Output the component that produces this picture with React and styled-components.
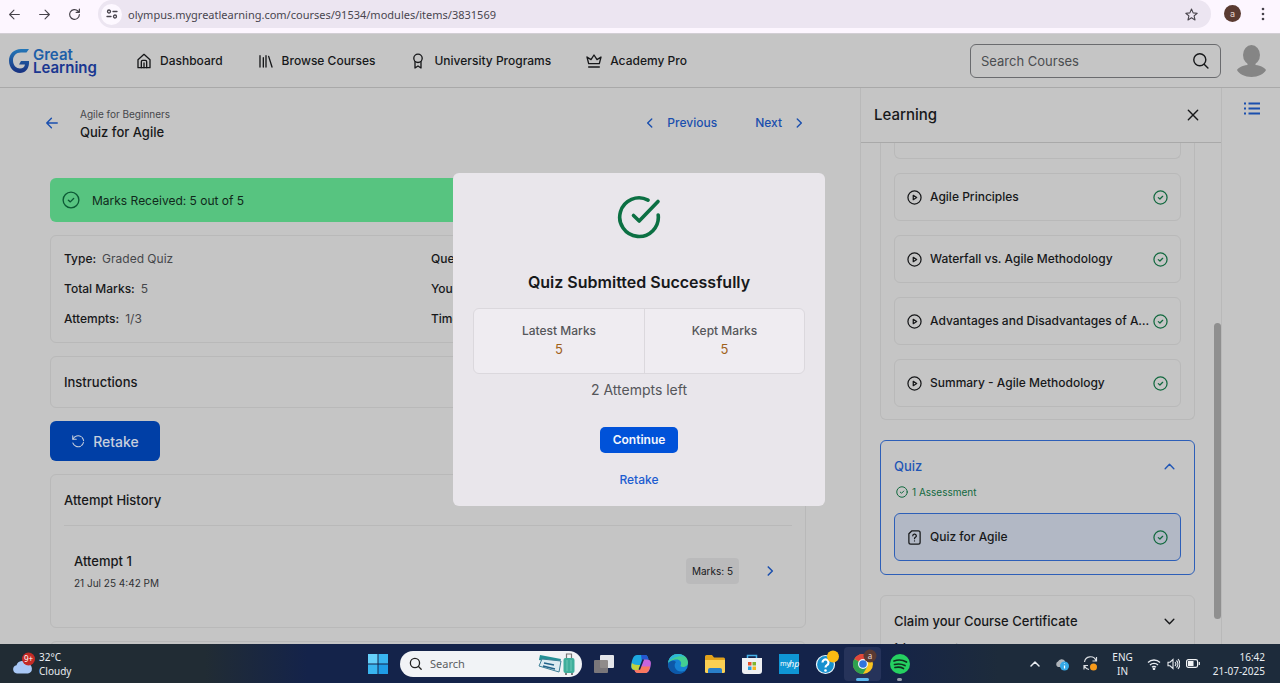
import React from "react";
import styled, { createGlobalStyle, css } from "styled-components";

const color = {
  page: "#c5c5c5",
  line: "#b9b9b9",
  lineStrong: "#a9a9a9",
  ink: "#17181a",
  muted: "#45474b",
  blue: "#1a4fae",
  green: "#12693f",
};

const GlobalStyle = createGlobalStyle`
  *, *::before, *::after { box-sizing: border-box; }
  body { margin: 0; font-family: Inter, "Liberation Sans", sans-serif; color: ${color.ink}; }
  h1, h2, h3, p, dl, dd, ul { margin: 0; padding: 0; font-weight: 500; }
  ul { list-style: none; }
  button, input { font: inherit; color: inherit; }
  button { border: 0; padding: 0; background: none; cursor: pointer; }
  a { color: inherit; text-decoration: none; }
  svg { display: block; flex: none; }
`;

const Screen = styled.div`
  display: flex;
  flex-direction: column;
  height: 100vh;
  overflow: hidden;
`;

/* ---------- icons ---------- */

const Icon = ({ size = 16, w = 2, children, box = 24, ...rest }) => (
  <svg
    width={size}
    height={size}
    viewBox={`0 0 ${box} ${box}`}
    fill="none"
    stroke="currentColor"
    strokeWidth={w}
    strokeLinecap="round"
    strokeLinejoin="round"
    aria-hidden="true"
    {...rest}
  >
    {children}
  </svg>
);

const ArrowLeft = (p) => <Icon {...p}><path d="M21 12H3M11 4l-8 8 8 8" /></Icon>;
const ArrowRight = (p) => <Icon {...p}><path d="M3 12h18M13 4l8 8-8 8" /></Icon>;
const ChevronLeft = (p) => <Icon {...p}><path d="m15 5-7 7 7 7" /></Icon>;
const ChevronRight = (p) => <Icon {...p}><path d="m9 5 7 7-7 7" /></Icon>;
const ChevronUp = (p) => <Icon {...p}><path d="m4 16 8-8 8 8" /></Icon>;
const ChevronDown = (p) => <Icon {...p}><path d="m4 8 8 8 8-8" /></Icon>;
const Close = (p) => <Icon {...p}><path d="M4 4l16 16M20 4 4 20" /></Icon>;
const SearchIcon = (p) => <Icon {...p}><circle cx="11" cy="11" r="8.5" /><path d="m17.5 17.5 5 5" /></Icon>;
const CheckSmall = (p) => <Icon {...p}><circle cx="12" cy="12" r="10.5" /><path d="m8.5 12.2 2.6 2.3 4.4-4.4" /></Icon>;
const Play = (p) => <Icon {...p}><circle cx="12" cy="12" r="10.5" /><path d="M10 8.5v7l5.5-3.5Z" /></Icon>;
const QuizDoc = (p) => (
  <Icon {...p}>
    <path d="M7.5 1.5H18a3 3 0 0 1 3 3v15a3 3 0 0 1-3 3H6a3 3 0 0 1-3-3V6Z" />
    <path d="M9.3 9.3a2.8 2.8 0 1 1 4.2 2.4c-1 .6-1.5 1-1.5 2.2M12 17.4v.1" />
  </Icon>
);

const Home = () => (
  <Icon size={16}>
    <path d="M3 10 12 2l9 8v12H3Z" />
    <path d="M8 22v-9a2 2 0 0 1 2-2h4a2 2 0 0 1 2 2v9M12 22v-7" />
  </Icon>
);
const Books = () => <Icon size={16}><path d="M3 4v17M8 7v14M12 4v17M16 5l5 16" /></Icon>;
const Medal = () => (
  <Icon size={16}>
    <circle cx="12" cy="8" r="6.3" />
    <path d="M7.500 13v9.500L12 19.500l4.500 3V13" />
  </Icon>
);
const Crown = () => (
  <Icon size={16}>
    <path d="M4 16 1.500 6l6 4L12 3l4.500 7 6-4L20 16ZM4 21h16" />
  </Icon>
);

/* ---------- browser bar ---------- */

const BrowserBar = styled.div`
  flex: none;
  display: flex;
  align-items: flex-start;
  height: 34px;
  padding: 0 10px 0 7px;
  background: #fdf6ff;
  border-bottom: 1px solid #d2ced4;
  color: #47434b;
`;
const BarButton = styled.button`
  display: grid;
  place-items: center;
  width: 15px;
  height: 28px;
`;
const BarButtons = styled.div`
  display: flex;
  gap: 15px;
  width: 91px;
`;
const Omnibox = styled.div`
  flex: 1;
  display: flex;
  align-items: center;
  gap: 6px;
  height: 28px;
  padding: 0 13px 0 3px;
  border-radius: 14px;
  background: #ece5f1;
`;
const SiteInfo = styled.button`
  display: grid;
  place-items: center;
  width: 21px;
  height: 21px;
  border-radius: 50%;
  background: #fdf8ff;
`;
const UrlInput = styled.input`
  flex: 1;
  min-width: 0;
  border: 0;
  outline: 0;
  padding: 0;
  background: transparent;
  font-family: "Noto Sans", "Open Sans", sans-serif;
  font-size: 11px;
  color: #49454f;
`;
const Profile = styled.button`
  width: 17px;
  height: 17px;
  margin: 5px 14px 0 13px;
  border-radius: 50%;
  background: #5a3a31;
  color: #e6d6d0;
  font-size: 9px;
  line-height: 16px;
`;

const Browser = () => (
  <BrowserBar>
    <BarButtons>
      <BarButton aria-label="Back"><ArrowLeft size={13} /></BarButton>
      <BarButton aria-label="Forward"><ArrowRight size={13} /></BarButton>
      <BarButton aria-label="Reload">
        <Icon size={13} w={2.2}><path d="M21 12a9 9 0 1 1-2.600-6.400L21 8M21 2v6h-6" /></Icon>
      </BarButton>
    </BarButtons>
    <Omnibox>
      <SiteInfo aria-label="Site information">
        <Icon size={12} w={2.6}><circle cx="6" cy="7" r="3" /><path d="M14 7h8M2 17h8" /><circle cx="18" cy="17" r="3" /></Icon>
      </SiteInfo>
      <UrlInput aria-label="Address" defaultValue="olympus.mygreatlearning.com/courses/91534/modules/items/3831569" />
      <Icon size={13}><path d="m12 2 3 7 7.500.700-5.700 5 1.700 7.300L12 18l-6.500 4 1.700-7.300-5.700-5L9 9Z" /></Icon>
    </Omnibox>
    <Profile aria-label="Profile">a</Profile>
    <BarButton aria-label="Menu">
      <svg width="4" height="14" viewBox="0 0 4 14" fill="currentColor"><circle cx="2" cy="2" r="1.3" /><circle cx="2" cy="7" r="1.3" /><circle cx="2" cy="12" r="1.3" /></svg>
    </BarButton>
  </BrowserBar>
);

/* ---------- site header ---------- */

const Site = styled.div`
  position: relative;
  flex: 1;
  min-height: 0;
  display: flex;
  flex-direction: column;
  overflow: hidden;
  background: ${color.page};
`;
const Header = styled.header`
  flex: none;
  display: flex;
  align-items: center;
  height: 54px;
  padding: 0 14px 0 9px;
  border-bottom: 1px solid ${color.lineStrong};
`;
const Logo = styled.a`
  display: flex;
  align-items: center;
  gap: 4px;
  width: 88px;
  font-size: 15px;
  line-height: 13px;
  font-weight: 600;
  color: #1b3f94;
`;
const LogoLine = styled.span`
  display: block;
  color: ${(p) => (p.$top ? "#1d5fa8" : "#1a3791")};
`;
const Nav = styled.nav`
  flex: 1;
  display: flex;
  gap: 35px;
  margin-left: 39px;
`;
const NavLink = styled.a`
  display: flex;
  align-items: center;
  gap: 8px;
  font-size: 12px;
  line-height: 20px;
  font-weight: 500;
  white-space: nowrap;
`;
const SearchBox = styled.label`
  display: flex;
  align-items: center;
  width: 251px;
  height: 34px;
  padding: 0 11px 0 10px;
  border: 1px solid #6a6b6e;
  border-radius: 6px;
`;
const SearchInput = styled.input`
  flex: 1;
  min-width: 0;
  border: 0;
  outline: 0;
  padding: 0;
  background: transparent;
  font-size: 13px;
  &::placeholder { color: #4b4d50; opacity: 1; }
`;
const Avatar = styled.button`
  margin-left: 16px;
`;

const LogoMark = () => (
  <svg width="20" height="26" viewBox="0 0 20 26" aria-hidden="true">
    <defs>
      <linearGradient id="mark" x1="0" y1="0" x2="0" y2="1">
        <stop offset="0" stopColor="#2377b8" />
        <stop offset="1" stopColor="#17307f" />
      </linearGradient>
    </defs>
    <path
      d="M20 1 17.500 4.500H12C7 4.500 4 8 4 12.500c0 5 3.500 8 7 8 3 0 4.500-1.500 5-4H10l2-3.500h8c.5 7-3 12-9 12C5 25 0 20 0 12.500 0 6 5 1 12 1Z"
      fill="url(#mark)"
    />
  </svg>
);

const navItems = [
  ["Dashboard", Home],
  ["Browse Courses", Books],
  ["University Programs", Medal],
  ["Academy Pro", Crown],
];

const SiteHeader = () => (
  <Header>
    <Logo href="#home">
      <LogoMark />
      <span><LogoLine $top>Great</LogoLine><LogoLine>Learning</LogoLine></span>
    </Logo>
    <Nav>
      {navItems.map(([label, Glyph]) => (
        <NavLink key={label} href="#nav"><Glyph />{label}</NavLink>
      ))}
    </Nav>
    <SearchBox>
      <SearchInput aria-label="Search Courses" placeholder="Search Courses" />
      <SearchIcon size={17} />
    </SearchBox>
    <Avatar aria-label="Account">
      <svg width="29" height="32" viewBox="0 0 29 32" fill="#858585">
        <ellipse cx="14.500" cy="10" rx="8.500" ry="10" />
        <path d="M10.500 17v3C5 20.500 1 23 0 25c2 4 8 7 14.500 7S27 29 29 25c-1-2-5-4.500-10.500-5v-3Z" />
      </svg>
    </Avatar>
  </Header>
);

/* ---------- main column ---------- */

const Columns = styled.div`
  flex: 1;
  min-height: 0;
  display: flex;
`;
const Main = styled.main`
  flex: 1;
  min-width: 0;
  overflow: hidden;
  padding: 16px 54px 0 50px;
`;
const TitleRow = styled.div`
  display: flex;
  align-items: center;
  height: 37px;
  margin-bottom: 37px;
`;
const BackLink = styled.a`
  width: 35px;
  margin-left: -5px;
  color: ${color.blue};
`;
const Titles = styled.div`
  flex: 1;
`;
const Crumb = styled.p`
  font-size: 10px;
  line-height: 18px;
  font-weight: 400;
  color: ${color.muted};
`;
const PageTitle = styled.h1`
  font-size: 13px;
  line-height: 18px;
`;
const Pager = styled.nav`
  display: flex;
  gap: 38px;
`;
const PagerLink = styled.a`
  display: flex;
  align-items: center;
  gap: 10px;
  font-size: 12px;
  line-height: 20px;
  font-weight: 500;
  color: ${color.blue};
`;
const Stack = styled.div`
  display: flex;
  flex-direction: column;
  align-items: stretch;
  gap: 13px;
`;
const Banner = styled.div`
  display: flex;
  align-items: center;
  gap: 12px;
  height: 44px;
  padding: 0 12px;
  border-radius: 6px;
  background: #57c480;
  color: #0c5a35;
  font-size: 12px;
`;
const BannerText = styled.span`
  color: #10291b;
`;
const Card = styled.section`
  border: 1px solid ${color.line};
  border-radius: 6px;
  padding: 13px;
`;
const MetaGrid = styled.dl`
  display: grid;
  grid-template-columns: 1fr 1fr;
  column-gap: 6px;
  row-gap: 10px;
  font-size: 12px;
  line-height: 20px;
`;
const MetaItem = styled.div`
  display: flex;
  gap: 6px;
  font-weight: 500;
`;
const MetaValue = styled.dd`
  font-weight: 400;
  color: ${color.muted};
`;
const CardTitle = styled.h2`
  font-size: 13px;
  line-height: 24px;
`;
const RetakeButton = styled.button`
  align-self: flex-start;
  display: flex;
  align-items: center;
  justify-content: center;
  gap: 8px;
  width: 110px;
  height: 40px;
  border-radius: 6px;
  background: #003fa6;
  color: #c7cfdd;
  font-size: 14px;
  font-weight: 500;
`;
const History = styled.div`
  display: flex;
  align-items: center;
  margin-top: 13px;
  padding: 23px 15px 21px 10px;
  border-top: 1px solid ${color.line};
`;
const HistoryText = styled.div`
  flex: 1;
`;
const HistoryTitle = styled.h3`
  font-size: 13px;
  line-height: 24px;
`;
const HistoryDate = styled.p`
  font-size: 10px;
  line-height: 20px;
  font-weight: 400;
  color: #2f3134;
`;
const Chip = styled.span`
  padding: 4px 6px;
  border-radius: 4px;
  background: #bababb;
  font-size: 10px;
  line-height: 18px;
`;
const OpenAttempt = styled.button`
  margin-left: 24px;
  color: ${color.blue};
`;

const meta = [
  ["Type:", "Graded Quiz"],
  ["Questions:", "5"],
  ["Total Marks:", "5"],
  ["Your Marks:", "5"],
  ["Attempts:", "1/3"],
  ["Time:", "No limit"],
];

const QuizPage = () => (
  <Main>
    <TitleRow>
      <BackLink href="#back" aria-label="Back to course"><ArrowLeft size={14} w={2.4} /></BackLink>
      <Titles>
        <Crumb>Agile for Beginners</Crumb>
        <PageTitle>Quiz for Agile</PageTitle>
      </Titles>
      <Pager>
        <PagerLink href="#previous"><ChevronLeft size={14} w={2.4} />Previous</PagerLink>
        <PagerLink href="#next">Next<ChevronRight size={14} w={2.4} /></PagerLink>
      </Pager>
    </TitleRow>
    <Stack>
      <Banner><CheckSmall size={18} w={1.8} /><BannerText>Marks Received: 5 out of 5</BannerText></Banner>
      <Card>
        <MetaGrid>
          {meta.map(([k, v]) => (
            <MetaItem key={k}><dt>{k}</dt><MetaValue>{v}</MetaValue></MetaItem>
          ))}
        </MetaGrid>
      </Card>
      <Card><CardTitle>Instructions</CardTitle></Card>
      <RetakeButton>
        <Icon size={14} w={1.8}><path d="M3 3v6h6" /><path d="M3.500 8.500A9.500 9.500 0 1 1 3 15" strokeDasharray="16 2.500 6 2.500 6 2.500" /></Icon>
        Retake
      </RetakeButton>
      <Card>
        <CardTitle>Attempt History</CardTitle>
        <History>
          <HistoryText>
            <HistoryTitle>Attempt 1</HistoryTitle>
            <HistoryDate>21 Jul 25 4:42 PM</HistoryDate>
          </HistoryText>
          <Chip>Marks: 5</Chip>
          <OpenAttempt aria-label="Open attempt 1"><ChevronRight size={14} w={2.600} /></OpenAttempt>
        </History>
      </Card>
      <Card />
    </Stack>
  </Main>
);

/* ---------- learning drawer ---------- */

const Drawer = styled.aside`
  flex: none;
  display: flex;
  flex-direction: column;
  width: 362px;
  border: solid ${color.line};
  border-width: 0 1px;
`;
const DrawerHead = styled.div`
  flex: none;
  display: flex;
  align-items: center;
  justify-content: space-between;
  height: 55px;
  padding: 0 21px 0 13px;
  border-bottom: 1px solid ${color.lineStrong};
`;
const DrawerTitle = styled.h2`
  font-size: 15px;
  line-height: 24px;
  font-weight: 500;
`;
const DrawerBody = styled.div`
  position: relative;
  flex: 1;
  min-height: 0;
  overflow: hidden;
  padding: 0 26px 0 19px;
`;
const ScrollThumb = styled.div`
  position: absolute;
  right: 0;
  top: 36%;
  height: 59%;
  width: 7px;
  border-radius: 4px;
  background: #8f8f8f;
`;
const Module = styled.section`
  padding: 13px;
  margin-bottom: 20px;
  border: 1px solid ${(p) => (p.$active ? "#2d5fb8" : color.line)};
  border-radius: 6px;
  ${(p) => p.$cut && css`
    padding-top: 0;
    padding-bottom: 12px;
    border-top: 0;
    border-radius: 0 0 6px 6px;
  `}
`;
const Lessons = styled.ul`
  display: flex;
  flex-direction: column;
  gap: 14px;
`;
const LessonLink = styled.a`
  display: flex;
  align-items: center;
  gap: 2px;
  height: 48px;
  padding: 0 12px;
  border: 1px solid ${(p) => (p.$active ? "#2d5fb8" : color.line)};
  border-radius: 6px;
  background: ${(p) => (p.$active ? "#b2b8c5" : "transparent")};
  font-size: 12px;
  line-height: 20px;
  font-weight: 500;
  ${(p) => p.$cut && css`
    height: 16px;
    border-top: 0;
    border-radius: 0 0 6px 6px;
  `}
`;
const LessonName = styled.span`
  flex: 1;
  min-width: 0;
  margin-left: 6px;
  overflow: hidden;
  white-space: nowrap;
  text-overflow: ellipsis;
`;
const Done = styled.span`
  color: ${color.green};
`;
const ModuleToggle = styled.button`
  display: flex;
  align-items: center;
  justify-content: space-between;
  width: 100%;
  padding-right: 5px;
  font-size: 13px;
  line-height: 24px;
  font-weight: 500;
  color: ${(p) => (p.$active ? "#1f55b5" : color.ink)};
`;
const ModuleNote = styled.p`
  display: flex;
  align-items: center;
  gap: 4px;
  margin: 6px 0 13px;
  padding-left: ${(p) => (p.$done ? 2 : 0)}px;
  font-size: 10px;
  line-height: 16px;
  font-weight: 400;
  color: ${(p) => (p.$done ? color.green : color.ink)};
`;
const Rail = styled.div`
  flex: none;
  display: flex;
  align-items: flex-start;
  width: 58px;
  padding: 14px 0 0 22px;
  color: ${color.blue};
`;

const lessons = [
  "Agile Principles",
  "Waterfall vs. Agile Methodology",
  "Advantages and Disadvantages of Agile Methodology",
  "Summary - Agile Methodology",
];

const LearningDrawer = () => (
  <Drawer>
    <DrawerHead>
      <DrawerTitle>Learning</DrawerTitle>
      <button aria-label="Close"><Close size={14} w={2.4} /></button>
    </DrawerHead>
    <DrawerBody>
      <Module $cut>
        <Lessons>
          <li><LessonLink $cut href="#lesson" aria-label="Earlier lesson" /></li>
          {lessons.map((name) => (
            <li key={name}>
              <LessonLink href="#lesson">
                <Play size={15} />
                <LessonName>{name}</LessonName>
                <Done><CheckSmall size={15} /></Done>
              </LessonLink>
            </li>
          ))}
        </Lessons>
      </Module>
      <Module $active>
        <ModuleToggle $active>Quiz<ChevronUp size={13} w={2.600} /></ModuleToggle>
        <ModuleNote $done><CheckSmall size={12} />1 Assessment</ModuleNote>
        <LessonLink $active href="#quiz">
          <QuizDoc size={15} />
          <LessonName>Quiz for Agile</LessonName>
          <Done><CheckSmall size={15} /></Done>
        </LessonLink>
      </Module>
      <Module>
        <ModuleToggle>Claim your Course Certificate<ChevronDown size={13} w={2.600} /></ModuleToggle>
        <ModuleNote>1 Assessment</ModuleNote>
      </Module>
      <ScrollThumb />
    </DrawerBody>
  </Drawer>
);

/* ---------- result dialog ---------- */

const Backdrop = styled.div`
  position: absolute;
  inset: 0;
  display: grid;
  place-items: center;
  padding-right: 2px;
`;
const Dialog = styled.div`
  display: flex;
  flex-direction: column;
  align-items: center;
  width: 372px;
  padding: 22px 20px 16px;
  border-radius: 6px;
  background: #e9e6eb;
`;
const DialogTitle = styled.h2`
  margin-top: 30px;
  font-size: 16px;
  line-height: 26px;
  font-weight: 600;
`;
const Scores = styled.dl`
  align-self: stretch;
  display: grid;
  grid-template-columns: 170px 1fr;
  margin-top: 13px;
  border: 1px solid #dbd8dd;
  border-radius: 6px;
  background: #efecf1;
  text-align: center;
`;
const Score = styled.div`
  padding: 13px 0 14px;
  line-height: 18px;
  font-size: 12px;
  color: #55565a;
  & + & { border-left: 1px solid #dbd8dd; }
`;
const ScoreValue = styled.dd`
  font-size: 13px;
  line-height: 19px;
  font-weight: 400;
  color: #a0611a;
`;
const AttemptsLeft = styled.p`
  margin-top: 6px;
  font-size: 14px;
  line-height: 20px;
  font-weight: 400;
  color: #55565a;
`;
const Continue = styled.button`
  height: 26px;
  margin-top: 27px;
  padding: 0 13px;
  border-radius: 5px;
  background: #0052d9;
  color: #f4f6fc;
  font-size: 12px;
  font-weight: 600;
`;
const RetakeText = styled.button`
  margin-top: 17px;
  font-size: 12px;
  line-height: 20px;
  font-weight: 500;
  color: #1c5cd0;
`;

const ResultDialog = () => (
  <Backdrop>
    <Dialog role="dialog" aria-labelledby="result-title">
      <Icon size={44} w={3.600} box={44} color="#0c7043">
        <path d="M31 5.100A19.300 19.300 0 1 0 41.200 20" />
        <path d="m16.500 20.500 5.700 5.500L41 6.500" />
      </Icon>
      <DialogTitle id="result-title">Quiz Submitted Successfully</DialogTitle>
      <Scores>
        <Score><dt>Latest Marks</dt><ScoreValue>5</ScoreValue></Score>
        <Score><dt>Kept Marks</dt><ScoreValue>5</ScoreValue></Score>
      </Scores>
      <AttemptsLeft>2 Attempts left</AttemptsLeft>
      <Continue>Continue</Continue>
      <RetakeText>Retake</RetakeText>
    </Dialog>
  </Backdrop>
);

/* ---------- taskbar ---------- */

const Taskbar = styled.footer`
  flex: none;
  display: grid;
  grid-template-columns: 1fr auto 1fr;
  align-items: center;
  height: 39px;
  background: linear-gradient(90deg, #212c34 0 16%, #14234a 24% 68%, #1d2b3b 78%);
  font-family: "Noto Sans", "Open Sans", sans-serif;
  font-size: 10px;
  line-height: 14px;
  color: #e9edf1;
`;
const Weather = styled.button`
  display: flex;
  align-items: center;
  gap: 4px;
  padding-left: 12px;
  text-align: left;
`;
const Dock = styled.div`
  display: flex;
  align-items: center;
  padding-left: 6px;
`;
const TaskSearch = styled.label`
  display: flex;
  align-items: center;
  gap: 8px;
  width: 182px;
  height: 26px;
  margin: 0 3px 0 12px;
  padding: 0 6px 0 9px;
  border-radius: 13px;
  background: #f1f3f6;
  color: #222;
`;
const TaskInput = styled.input`
  flex: 1;
  min-width: 0;
  width: 60px;
  border: 0;
  outline: 0;
  padding: 0;
  background: transparent;
  font-size: 11px;
  &::placeholder { color: #5b5d61; opacity: 1; }
`;
const DockButton = styled.button`
  position: relative;
  display: grid;
  place-items: center;
  width: 37px;
  height: 34px;
  ${(p) => p.$active && css`
    border-radius: 4px;
    background: #26335a;
  `}
  ${(p) => p.$mark && css`
    &::after {
      content: "";
      position: absolute;
      bottom: 0;
      width: ${p.$mark}px;
      height: 3px;
      border-radius: 2px;
      background: ${p.$active ? "#5cb8ee" : "#98a0ad"};
    }
  `}
`;
const Tray = styled.div`
  display: flex;
  align-items: center;
  justify-content: flex-end;
  padding-right: 15px;
`;
const TrayGroup = styled.div`
  display: flex;
  align-items: center;
  gap: ${(p) => p.$gap}px;
  margin-right: ${(p) => p.$after}px;
`;
const Stacked = styled.div`
  text-align: ${(p) => p.$align};
  margin-right: ${(p) => p.$after || 0}px;
`;

const WeatherIcon = () => (
  <svg width="23" height="24" viewBox="0 0 23 24" aria-hidden="true">
    <path d="M5 21.500a4.200 4.200 0 0 1-.500-8.300A6 6 0 0 1 15.500 12a4.800 4.800 0 0 1 .500 9.500Z" fill="#a9c8f6" />
    <circle cx="16.500" cy="7" r="6.500" fill="#c42b26" />
    <text x="16.500" y="10" fontSize="8" fill="#fff" textAnchor="middle">9+</text>
  </svg>
);

const WindowsIcon = () => (
  <svg width="20" height="20" viewBox="0 0 20 20" fill="#39b5f0" aria-hidden="true">
    <path d="M0 0h9.500v9.500H0Z" fill="#66d0fa" /><path d="M10.500 0H20v9.500h-9.500ZM0 10.500h9.500V20H0Z" /><path d="M10.500 10.500H20V20h-9.500Z" fill="#1f9ce6" />
  </svg>
);

const TravelIcon = () => (
  <svg width="38" height="22" viewBox="0 0 38 22" aria-hidden="true">
    <path d="m2 2 21 4-2 5L1 7Z" fill="#238f95" />
    <path d="m4 6 19 2-2 11L1 13Z" fill="#dcebf2" stroke="#3c7f97" />
    <path d="m6 10 10 2M5 13l12 3" stroke="#23638a" strokeWidth="1.500" />
    <path d="M28.500 6V1h5v5" fill="none" stroke="#777" strokeWidth="1.200" />
    <rect x="25.500" y="5" width="11" height="15" rx="2" fill="#3fae9b" />
    <path d="M29 7v11M33 7v11" stroke="#6cc7b5" />
    <path d="M27 21h2M33 21h2" stroke="#555" strokeWidth="1.500" />
  </svg>
);

const dockIcons = [
  { name: "Task view", art: <><rect x="6" y="1" width="14" height="13" rx="1" fill="#e4e6ea" /><rect x="0" y="6" width="14" height="13" rx="1" fill="#85817f" opacity=".9" /></> },
  { name: "Copilot", art: <>
    <path d="M6 1h8c2 0 3 2 3.500 4.500H13c-1 0-1.500 1-2 2.500l-2 6c-.5 1.500-1 2-2.500 2H4c-4 0-4.500-3-3.500-7S2.500 1 6 1Z" fill="#1da8e0" />
    <path d="M1 9c2 2 5 2 8.500 2L8.500 14.500c-.5 1-1 1.500-2 1.500H4C.500 16 0 12.500 1 9Z" fill="#c3d23c" />
    <path d="M10 1h4c2 0 3 2 3.500 4.500H13c-1 0-1.500 1-2 2.500Z" fill="#2457d0" />
    <path d="M13.500 5.500H16c4 0 4.500 3 3.500 7s-2 6.500-5.500 6.500H7c-2 0-3-1-3.500-3h3c1.500 0 2-.5 2.500-2l2-6c.5-1.500 1-2.500 2.500-2.500Z" fill="#c765dc" />
    <path d="M9.500 12.500H19c-1 4-2 6.500-5 6.500H7c-2 0-3-1-3.500-3h3c1.500 0 2-.5 3-3.500Z" fill="#f9785f" />
    <path d="M12 6 8.500 15" stroke="#14234a" strokeWidth="1.600" strokeLinecap="round" />
  </> },
  { name: "Edge", art: <>
    <circle cx="10" cy="10" r="10" fill="#1682d4" />
    <path d="M0 9C1 3 5 0 10 0c6 0 10 4 10 8.500 0 3-2.500 4.500-5 4.500-2 0-3-1-2.200-2C14 8 12 5.500 8.500 5.500 4 5.500 1 8 0 9Z" fill="#43cf92" />
    <path d="M0 9C1 3 5 0 10 0c3 0 5 1 7 3C12 1 4 3 0 9Z" fill="#2db6d8" />
    <path d="M8 8c-3 3-1 10 6 9.500 2 0 4-1.500 4.500-2C16 19 13 20 10 20 4 20 0 15.500 0 10c2-4 6-4 8-2Z" fill="#0d58a8" />
  </> },
  { name: "File Explorer", art: <>
    <path d="M0 2.500A1.500 1.500 0 0 1 1.500 1H7l2 2.500h9.500A1.500 1.500 0 0 1 20 5v4H0Z" fill="#e2a21b" />
    <path d="M0 6h20v11.500a1.500 1.500 0 0 1-1.500 1.500h-17A1.500 1.500 0 0 1 0 17.500Z" fill="#fcd053" />
    <path d="M3 19v-3a2 2 0 0 1 2-2h10a2 2 0 0 1 2 2v3Z" fill="#2a7fc9" />
  </> },
  { name: "Store", art: <>
    <path d="M5.500 5V1.500h9V5" fill="none" stroke="#46b1e8" strokeWidth="1.500" />
    <path d="M0 4h20v13a3 3 0 0 1-3 3H3a3 3 0 0 1-3-3Z" fill="#eef0f3" />
    <path d="M6 8h3.500v3.500H6Z" fill="#e8502a" /><path d="M10.500 8H14v3.500h-3.500Z" fill="#7fb52b" />
    <path d="M6 12.500h3.500V16H6Z" fill="#29a0df" /><path d="M10.500 12.500H14V16h-3.500Z" fill="#f4b61d" />
  </> },
  { name: "myHP", art: <>
    <rect width="20" height="20" fill="#0f96d5" />
    <text x="1" y="12" fontSize="7" fill="#fff">my</text>
    <text x="10" y="13" fontSize="9" fontStyle="italic" fill="#fff">hp</text>
  </> },
  { name: "Help", art: <>
    <circle cx="9.500" cy="10.500" r="9" fill="#1590cf" stroke="#eaf4fa" strokeWidth="1.200" />
    <path d="M6.500 8.500a3 3 0 1 1 4.500 2.600c-1 .6-1.500 1-1.500 2.400" fill="none" stroke="#fff" strokeWidth="2.200" />
    <circle cx="9.500" cy="16.500" r="1.300" fill="#fff" />
    <circle cx="17" cy="2.500" r="6" fill="#fdbb12" />
  </> },
  { name: "Chrome", active: true, mark: 13, art: <>
    <circle cx="10" cy="10" r="10" fill="#f9c31f" />
    <path d="M10 10 1.300 5A10 10 0 0 1 18.700 5Z" fill="#e2463a" />
    <path d="M10 10 1.300 5A10 10 0 0 0 10 20l4.300-7.500Z" fill="#2ea14f" />
    <path d="M10 5h8.700L10 10Z" fill="#e2463a" />
    <circle cx="10" cy="10" r="5" fill="#f5f7f9" /><circle cx="10" cy="10" r="3.800" fill="#2f74dc" />
    <circle cx="17" cy="2" r="6.500" fill="#593a33" />
    <text x="17" y="5" fontSize="8" fill="#e8dcd8" textAnchor="middle">a</text>
  </> },
  { name: "Spotify", mark: 5, art: <>
    <circle cx="10" cy="10" r="10" fill="#25d161" />
    <path d="M4 7c4-1.500 9-1 12.500 1M4.500 10.500c4-1 7.500-.5 10.500 1M5 13.500c3-.7 6-.4 8.500 1" fill="none" stroke="#10301f" strokeWidth="1.700" strokeLinecap="round" />
  </> },
];

const WindowsTaskbar = () => (
  <Taskbar>
    <Weather><WeatherIcon /><span>32°C<br />Cloudy</span></Weather>
    <Dock>
      <button aria-label="Start"><WindowsIcon /></button>
      <TaskSearch>
        <SearchIcon size={13} w={2.400} />
        <TaskInput aria-label="Search" placeholder="Search" />
        <TravelIcon />
      </TaskSearch>
      {dockIcons.map((d) => (
        <DockButton key={d.name} aria-label={d.name} $active={d.active} $mark={d.mark}>
          <svg width="20" height="20" viewBox="0 0 20 20" overflow="visible">{d.art}</svg>
        </DockButton>
      ))}
    </Dock>
    <Tray>
      <TrayGroup $gap={14} $after={14}>
        <ChevronUp size={12} w={3} />
        <svg width="14" height="14" viewBox="0 0 14 14">
          <path d="M3 10a3 3 0 0 1 0-5.500A4 4 0 0 1 10 4v6Z" fill="#aeb4ba" />
          <circle cx="9.500" cy="9" r="4.500" fill="#35a9e6" /><path d="M9.500 8.500v3M9.500 6.500v.6" stroke="#fff" strokeWidth="1.200" />
        </svg>
        <svg width="15" height="15" viewBox="0 0 15 15" fill="none" stroke="#d9dde1" strokeWidth="1.200">
          <path d="M1.500 6A6 6 0 0 1 13 4.500M13.500 1v4h-4M1 13.500v-4h4M1.500 10A6 6 0 0 0 6 13.500" />
          <circle cx="10.500" cy="11" r="3.500" fill="#f79a1a" stroke="none" />
        </svg>
      </TrayGroup>
      <Stacked $align="center" $after={14}>ENG<br />IN</Stacked>
      <TrayGroup $gap={6} $after={13}>
        <svg width="14" height="12" viewBox="0 0 14 12" fill="none" stroke="#e9edf1" strokeWidth="1.300">
          <path d="M1 4.500a8.500 8.500 0 0 1 12 0M3 7a5.600 5.600 0 0 1 8 0M5 9.200a2.800 2.800 0 0 1 4 0" /><circle cx="7" cy="10.800" r=".7" />
        </svg>
        <svg width="13" height="12" viewBox="0 0 13 12" fill="none" stroke="#e9edf1" strokeWidth="1.100">
          <path d="M1 4.200h2L6 1.500v9L3 7.800H1ZM8 4a3 3 0 0 1 0 4M9.500 2.500a5 5 0 0 1 0 7M11 1a7.500 7.500 0 0 1 0 10" />
        </svg>
        <svg width="14" height="9" viewBox="0 0 14 9" fill="none" stroke="#f2f4f6" strokeWidth="1.200">
          <rect x=".6" y=".6" width="11" height="7.800" rx="1.800" /><path d="M13.300 3v3" /><rect x="2" y="2" width="5.500" height="5" fill="#f2f4f6" stroke="none" />
        </svg>
      </TrayGroup>
      <Stacked $align="right">16:42<br />21-07-2025</Stacked>
    </Tray>
  </Taskbar>
);

export default function App() {
  return (
    <Screen>
      <GlobalStyle />
      <Browser />
      <Site>
        <SiteHeader />
        <Columns>
          <QuizPage />
          <LearningDrawer />
          <Rail>
            <button aria-label="Course outline">
              <svg width="16" height="13" viewBox="0 0 16 13" stroke="currentColor" strokeWidth="1.800" fill="none">
                <path d="M4.500 1.500H16M4.500 6.500H16M4.500 11.500H16M0 1.500h2M0 6.500h2M0 11.500h2" />
              </svg>
            </button>
          </Rail>
        </Columns>
        <ResultDialog />
      </Site>
      <WindowsTaskbar />
    </Screen>
  );
}
